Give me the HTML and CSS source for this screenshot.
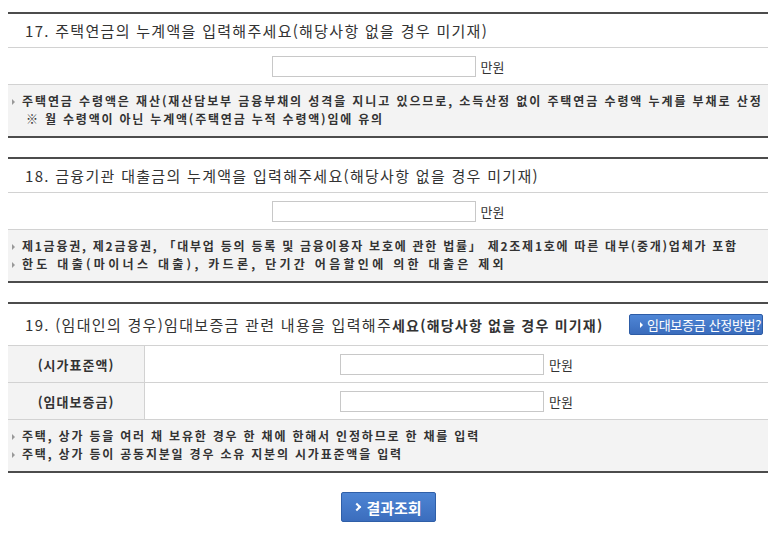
FILE: index.html
```html
<!DOCTYPE html>
<html lang="ko">
<head>
<meta charset="utf-8">
<link rel="stylesheet" href="styles.css">
</head>
<body>
<div class="wrap">
  <section class="sec">
    <div class="title">17. 주택연금의 누계액을 입력해주세요(해당사항 없을 경우 미기재)</div>
    <div class="inrow"><span class="box"></span><span class="unit">만원</span></div>
    <div class="notes">
      <p class="b s19">주택연금 수령액은 재산(재산담보부 금융부채의 성격을 지니고 있으므로, 소득산정 없이 주택연금 수령액 누계를 부채로 산정</p>
      <p class="ind">※ 월 수령액이 아닌 누계액(주택연금 누적 수령액)임에 유의</p>
    </div>
  </section>

  <section class="sec">
    <div class="title">18. 금융기관 대출금의 누계액을 입력해주세요(해당사항 없을 경우 미기재)</div>
    <div class="inrow"><span class="box"></span><span class="unit">만원</span></div>
    <div class="notes">
      <p class="b s21">제1금융권, 제2금융권, 「대부업 등의 등록 및 금융이용자 보호에 관한 법률」 제2조제1호에 따른 대부(중개)업체가 포함</p>
      <p class="b s33">한도 대출(마이너스 대출), 카드론, 단기간 어음할인에 의한 대출은 제외</p>
    </div>
  </section>

  <section class="sec">
    <div class="title t19"><span>19. (임대인의 경우)임대보증금 관련 내용을 입력해주<b>세요(해당사항 없을 경우 미기재)</b></span><a class="sbtn" href="#"><i class="arr"></i>임대보증금 산정방법?</a></div>
    <div class="trow"><div class="lab">(시가표준액)</div><div class="cell"><span class="box"></span><span class="unit">만원</span></div></div>
    <div class="trow"><div class="lab">(임대보증금)</div><div class="cell"><span class="box"></span><span class="unit">만원</span></div></div>
    <div class="notes">
      <p class="b">주택, 상가 등을 여러 채 보유한 경우 한 채에 한해서 인정하므로 한 채를 입력</p>
      <p class="b">주택, 상가 등이 공동지분일 경우 소유 지분의 시가표준액을 입력</p>
    </div>
  </section>

  <div class="act"><a class="bbtn" href="#"><i class="chev"></i>결과조회</a></div>
</div>
</body>
</html>
```

FILE: styles.css
```css
* { box-sizing: border-box; }
body { margin: 0; background: #fff; font-family: "Noto Sans CJK KR", "Noto Sans", sans-serif; color: #333; }
.wrap { width: 760px; margin: 12px 0 0 8px; }
.sec { border-top: 2px solid #4c4c4c; border-bottom: 2px solid #4c4c4c; margin-bottom: 19px; }
.title { height: 34px; border-bottom: 1px solid #d2d2d2; padding-left: 17px; display: flex; align-items: center; font-size: 15px; letter-spacing: 1.3px; color: #333; }
.t19 { height: 42px; justify-content: space-between; padding-right: 5px; }
.t19 b { font-weight: bold; font-size: 14px; letter-spacing: 1.2px; }
.inrow { height: 37px; border-bottom: 1px solid #d2d2d2; display: flex; align-items: center; justify-content: center; }
.box { display: block; width: 204px; height: 21px; border: 1px solid #c8c8c8; background: #fff; }
.unit { font-size: 13px; margin-left: 5px; color: #333; }
.notes { background: #f3f3f3; padding: 7px 0 8px 4px; }
.notes p { margin: 0; font-size: 12px; line-height: 18px; font-weight: bold; letter-spacing: 1.8px; color: #333; position: relative; padding-left: 10px; white-space: nowrap; }
.notes p.s19 { letter-spacing: 1.9px; }
.notes p.s21 { letter-spacing: 1.75px; }
.notes p.s33 { letter-spacing: 3.3px; }
.notes p.b::before { content: ""; position: absolute; left: 0; top: 7px; border-left: 3px solid #999; border-top: 3px solid transparent; border-bottom: 3px solid transparent; }
.notes p.ind { padding-left: 14px; }
.trow { height: 37px; border-bottom: 1px solid #d2d2d2; display: flex; }
.lab { width: 137px; background: #f3f3f3; border-right: 1px solid #d2d2d2; display: flex; align-items: center; justify-content: center; font-size: 13px; font-weight: bold; letter-spacing: 1px; }
.cell { flex: 1; display: flex; align-items: center; justify-content: center; }
.sbtn { display: flex; align-items: center; height: 21px; width: 134px; padding-left: 10px; border: 1px solid #2d5ca6; border-radius: 2px; background: linear-gradient(#4f86d6, #3a6cbc); color: #fff; font-size: 13px; text-decoration: none; letter-spacing: -0.3px; }
.arr { display: block; width: 0; height: 0; border-left: 3px solid #fff; border-top: 3px solid transparent; border-bottom: 3px solid transparent; margin-right: 4px; }
.act { display: flex; justify-content: center; }
.bbtn { display: flex; align-items: center; justify-content: center; width: 95px; height: 30px; border: 1px solid #2f5fa8; border-radius: 2px; background: linear-gradient(#4e85d4, #3b6dbd); color: #fff; font-size: 15px; font-weight: bold; text-decoration: none; }
.chev { display: block; width: 6px; height: 6px; border-right: 2px solid #fff; border-top: 2px solid #fff; transform: rotate(45deg); margin-right: 6px; }
```
